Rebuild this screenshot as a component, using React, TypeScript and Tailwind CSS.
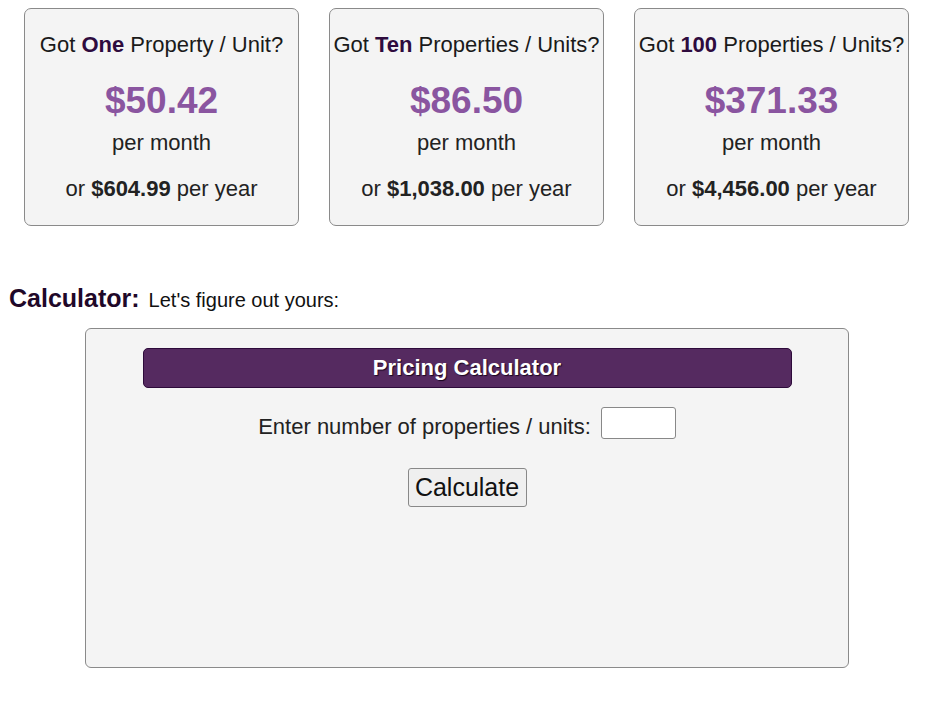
import React from "react";

const plans = [
  { qty: "One", label: "Property / Unit?", month: "$50.42", year: "$604.99" },
  { qty: "Ten", label: "Properties / Units?", month: "$86.50", year: "$1,038.00" },
  { qty: "100", label: "Properties / Units?", month: "$371.33", year: "$4,456.00" },
];

export default function App() {
  return (
    <div className="min-h-[719px] bg-white text-[#222] font-['Liberation_Sans',Arial,sans-serif]">
      <div className="flex gap-[30px] pl-[24px] pt-[8px]">
        {plans.map((p) => (
          <div
            key={p.qty}
            className="w-[275px] h-[218px] bg-[#f4f4f4] border border-[#8a8a8a] rounded-[7px] flex flex-col items-center pt-[24px]"
          >
            <div className="text-[22px] leading-[24px] text-[#1a1a1a] whitespace-nowrap">
              Got <span className="font-bold text-[#2e0b3e]">{p.qty}</span> {p.label}
            </div>
            <div className="mt-[24px] text-[37px] leading-[40px] font-bold text-[#8a55a0]">{p.month}</div>
            <div className="mt-[10px] text-[22px] leading-[24px]">per month</div>
            <div className="mt-[22px] text-[22px] leading-[24px]">
              or <span className="font-bold">{p.year}</span> per year
            </div>
          </div>
        ))}
      </div>

      <div className="mt-[54px] pl-[9px] flex items-baseline gap-[9px]">
        <span className="text-[25px] font-bold text-[#1f0829]">Calculator:</span>
        <span className="text-[20px] text-[#111]">Let's figure out yours:</span>
      </div>

      <div className="ml-[85px] mt-[10px] w-[764px] h-[340px] bg-[#f4f4f4] border border-[#8a8a8a] rounded-[6px] pt-[19px] flex flex-col items-center">
        <div className="w-[649px] h-[40px] bg-[#552a60] border border-[#2d0a3a] rounded-[5px] flex items-center justify-center">
          <span className="text-white font-bold text-[22px] [text-shadow:1px_1px_1px_#1a0520]">Pricing Calculator</span>
        </div>
        <div className="mt-[16px] flex items-center gap-[10px]">
          <span className="text-[22px] text-[#222] mt-[6px]">Enter number of properties / units:</span>
          <input
            type="text"
            className="w-[75px] h-[32px] bg-white border border-[#888] rounded-[3px] px-1 outline-none"
          />
        </div>
        <button
          type="button"
          className="mt-[25px] w-[119px] h-[39px] bg-[#efefef] border border-[#888] rounded-[3px] text-[25px] text-[#111] leading-none"
        >
          Calculate
        </button>
      </div>
    </div>
  );
}
